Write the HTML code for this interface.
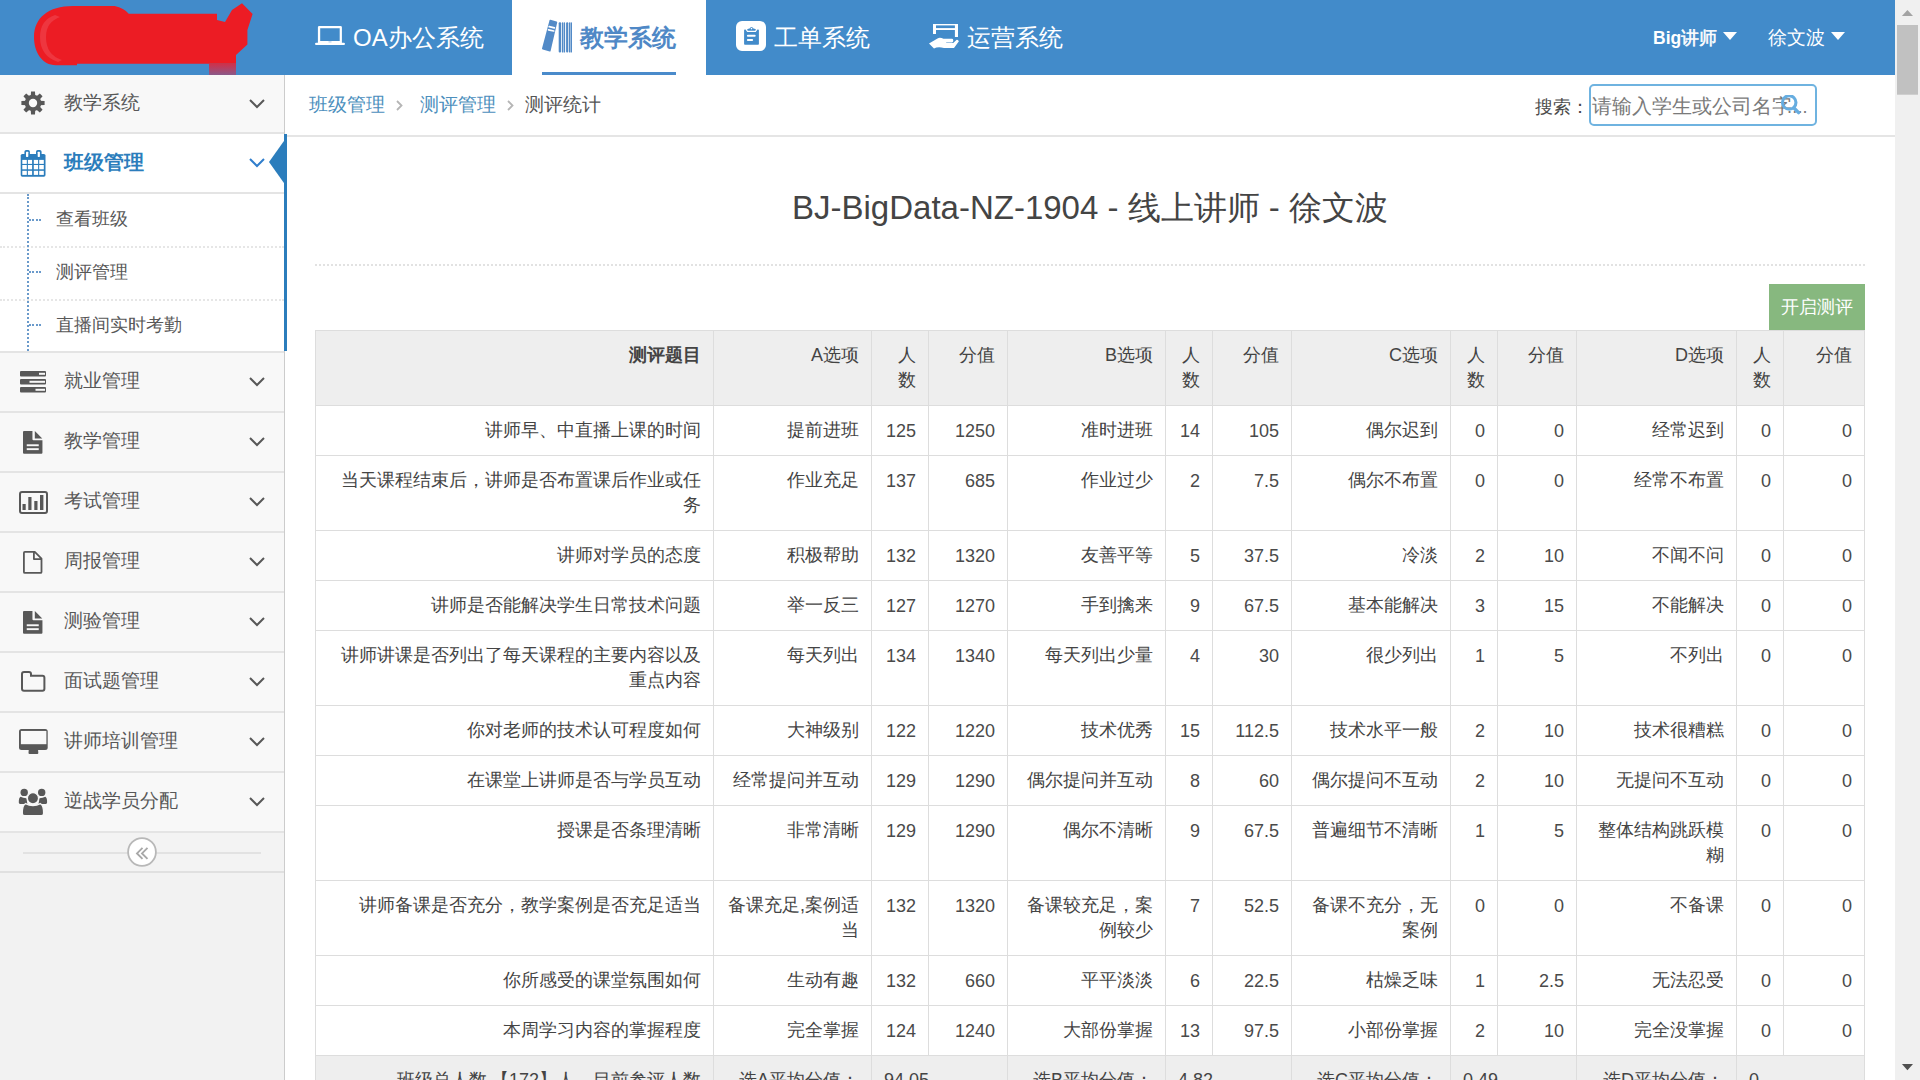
<!DOCTYPE html>
<html><head><meta charset="utf-8">
<style>
*{box-sizing:border-box}
html,body{margin:0;padding:0;width:1920px;height:1080px;overflow:hidden;background:#fff;font-family:"Liberation Sans",sans-serif;color:#393939}
.abs{position:absolute}
#hdr{position:absolute;left:0;top:0;width:1895px;height:75px;background:#428bca}
.tab{position:absolute;top:0;height:75px;color:#fff;font-size:24px;line-height:75px;white-space:nowrap}
.tab svg{position:absolute}
#side{position:absolute;z-index:5;left:0;top:75px;width:285px;height:1005px;background:#f2f2f2;border-right:1px solid #ccc}
.nav{position:absolute;left:0;width:284px;height:60px;background:#f8f8f8;border-bottom:2px solid #e4e4e4;font-size:19.5px;color:#585858}
.nav .t{position:absolute;left:64px;top:-1px;line-height:58px;font-size:19px}
.nav svg{position:absolute}
.chev{position:absolute;left:249px;width:16px;height:10px}
#crumb{position:absolute;left:285px;top:75px;width:1610px;height:62px;border-bottom:2px solid #e5e5e5;background:#fff;font-size:19px}
#scroll{position:absolute;left:1895px;top:0;width:25px;height:1080px;background:#f0f0f0}
table.d{position:absolute;left:315px;top:330px;width:1549px;border-collapse:collapse;table-layout:fixed;font-size:18px;color:#444}
table.d td,table.d th{border:1px solid #ddd;padding:12px 12px 12px 12px;line-height:25px;text-align:right;vertical-align:top;font-weight:normal}
table.d th{background:#eee;padding-top:12px}
table.d tr.f td{background:#eee}
.n{position:relative;top:1px;color:#4a4a4a}
</style></head><body>
<div id="hdr">
  <svg class="abs" style="left:0;top:0" width="260" height="75" viewBox="0 0 260 75"><path fill="#ec1c24" d="M73 6L114.6 6Q124 8 128.7 13.7L217 13.7L217 20L225 22L232 10L242 3.3L252.6 14L247.4 30L247.4 44.4L236 55L236 63.7L77 63.7L77 65.2L56 65.2C42 65.2 34 52 34 37C34 18 48 6 73 6Z"/><defs><linearGradient id="lg" x1="0" y1="0" x2="0" y2="1"><stop offset="0" stop-color="#d0304a"/><stop offset="1" stop-color="#8a5a8a"/></linearGradient></defs><path fill="url(#lg)" d="M209 63.7H236V75H209Z"/><path fill="#f0505a" opacity="0.5" d="M40 37Q40 20 55 15L60 17Q46 22 46 37Q46 55 62 60L58 62Q40 56 40 37Z"/></svg>
  <div class="tab" style="left:315px">
    <svg style="left:-5px;top:18px" width="40" height="35" viewBox="0 0 40 35"><path fill="#fff" fill-rule="evenodd" d="M9.3 7.9H30.5Q31.9 7.9 31.9 9.3V24.8H33.8Q35 24.8 35 26Q35 27.1 33.8 27.1H6.2Q5 27.1 5 26Q5 24.8 6.2 24.8H7.9V9.3Q7.9 7.9 9.3 7.9ZM10.2 10.2V23H29.7V10.2Z"/><rect x="18.5" y="23.4" width="3" height="1" fill="#a9c9e9"/></svg>
    <span style="position:absolute;left:38px;top:0">OA办公系统</span>
  </div>
  <div class="tab" style="left:512px;width:194px;background:#fff;color:#4f88c6;font-weight:bold">
    <svg style="left:24px;top:15px" width="44" height="43" viewBox="0 0 44 43"><path fill="#528ac7" d="M13.6 5.1Q13.9 4.6 14.5 4.8L20.6 6.6Q21.4 6.9 21.2 7.6L14.6 36Q14.4 36.6 13.7 36.5L6.7 34.5Q5.9 34.2 6 33.5Z"/><path stroke="#fff" stroke-width="1.7" stroke-linecap="round" d="M13.2 11.6L18.4 12.8M12.5 14.8L17.7 16"/><g fill="#528ac7"><rect x="22.7" y="7.2" width="2.4" height="30.4" rx="1"/><rect x="25.9" y="7.2" width="1.4" height="30.4" rx=".7"/><rect x="27.7" y="7.2" width="1.4" height="30.4" rx=".7"/><rect x="30.1" y="7.2" width="2.2" height="30.4" rx="1"/><rect x="33" y="7.2" width="1.3" height="30.4" rx=".6"/><rect x="34.6" y="7.2" width="1.4" height="30.4" rx=".7"/></g></svg>
    <span style="position:absolute;left:68px;top:0">教学系统</span>
    <div class="abs" style="left:30px;top:72px;width:134px;height:3px;background:#4a8bcb"></div>
  </div>
  <div class="tab" style="left:736px">
    <svg style="left:-6px;top:15px" width="45" height="43" viewBox="0 0 45 43"><rect x="6" y="6" width="30" height="30" rx="6" fill="#fff"/><path fill="#428bca" d="M14.1 15.2Q14.1 14.5 14.8 14.5H15.6L17.2 17H25.8L27.4 14.5H28.2Q28.9 14.5 28.9 15.2V28.9Q28.9 29.7 28.1 29.7H14.9Q14.1 29.7 14.1 28.9Z"/><path fill="#428bca" d="M17.1 14.3L20 13.3Q20.5 12 21.5 12Q22.5 12 23 13.3L25.9 14.3L25.3 15.8H17.7Z"/><circle cx="21.5" cy="13.6" r=".8" fill="#fff"/><rect x="16.9" y="19.7" width="8.8" height="2" rx="1" fill="#fff"/><rect x="16.9" y="24.1" width="6.2" height="2" rx="1" fill="#fff"/></svg>
    <span style="position:absolute;left:38px;top:0">工单系统</span>
  </div>
  <div class="tab" style="left:929px">
    <svg style="left:-7px;top:15px" width="45" height="43" viewBox="0 0 45 43"><g fill="#fff"><path d="M11 9H36V21.9H32.9V15.1H14V19.1H11Z"/><rect x="14" y="10.4" width="18.9" height="2.7" fill="#428bca"/><path d="M7 28.5L15.5 23.4Q18 22 21.5 23.8H30.2Q31.3 23.8 31.3 25.6Q31.3 27.4 30.2 27.4H24.2V27.9H31.2L34.4 24.9Q35.5 24.4 36.9 26.2L32 33H22Q16 31.4 12 33.5Z"/></g></svg>
    <span style="position:absolute;left:38px;top:0">运营系统</span>
  </div>
  <div class="tab" style="left:1653px;top:1px;font-size:17.5px;font-weight:bold">Big<span style="font-weight:normal;-webkit-text-stroke:0.5px #fff">讲师</span><svg style="left:70px;top:31px" width="14" height="8"><path d="M0 0 L14 0 L7 8 Z" fill="#fff"/></svg></div>
  <div class="tab" style="left:1768px;font-size:18.5px">徐文波<svg style="left:63px;top:32px" width="14" height="8"><path d="M0 0 L14 0 L7 8 Z" fill="#fff"/></svg></div>
</div>

<div id="side"><div class="nav" style="top:0;height:59px"><svg style="left:21.1px;top:16.3px" width="24" height="24" viewBox="0 0 24 24"><g fill="#585858"><path d="M18.00 9.65L23.60 10.05L23.60 13.95L18.00 14.35Z"/><path d="M17.90 14.58L21.58 18.82L18.82 21.58L14.58 17.90Z"/><path d="M14.35 18.00L13.95 23.60L10.05 23.60L9.65 18.00Z"/><path d="M9.42 17.90L5.18 21.58L2.42 18.82L6.10 14.58Z"/><path d="M6.00 14.35L0.40 13.95L0.40 10.05L6.00 9.65Z"/><path d="M6.10 9.42L2.42 5.18L5.18 2.42L9.42 6.10Z"/><path d="M9.65 6.00L10.05 0.40L13.95 0.40L14.35 6.00Z"/><path d="M14.58 6.10L18.82 2.42L21.58 5.18L17.90 9.42Z"/><circle cx="12" cy="12" r="8.3"/></g><circle cx="12" cy="12" r="4.2" fill="#f8f8f8"/></svg><div class="t">教学系统</div><svg class="chev" style="top:24px" width="16" height="10" viewBox="0 0 16 10"><path d="M1 1 L8 8 L15 1" fill="none" stroke="#585858" stroke-width="2"/></svg></div><div class="nav" style="top:59px;height:60px;background:#fff"><svg style="left:14px;top:9px" width="38" height="40" viewBox="0 0 38 40"><rect x="6.7" y="10.9" width="24.8" height="22.8" rx="1.6" fill="#2b7dbc"/><g fill="#2b7dbc"><rect x="10.4" y="6.9" width="5.5" height="7.5" rx="1.8"/><rect x="22" y="6.9" width="5.6" height="7.5" rx="1.8"/></g><g fill="#fff"><rect x="12" y="8.7" width="2.3" height="5.2" rx=".6"/><rect x="23.7" y="8.7" width="2.2" height="5.2" rx=".6"/><rect x="8.3" y="16.9" width="4.50" height="4.00"/><rect x="8.3" y="22" width="4.50" height="4.30"/><rect x="8.3" y="27.8" width="4.50" height="4.10"/><rect x="13.9" y="16.9" width="4.20" height="4.00"/><rect x="13.9" y="22" width="4.20" height="4.30"/><rect x="13.9" y="27.8" width="4.20" height="4.10"/><rect x="19.8" y="16.9" width="4.30" height="4.00"/><rect x="19.8" y="22" width="4.30" height="4.30"/><rect x="19.8" y="27.8" width="4.30" height="4.10"/><rect x="25.2" y="16.9" width="4.60" height="4.00"/><rect x="25.2" y="22" width="4.60" height="4.30"/><rect x="25.2" y="27.8" width="4.60" height="4.10"/></g></svg><div class="t" style="color:#2b7dbc;font-weight:bold;font-size:19.5px;top:-1.5px">班级管理</div><svg class="chev" style="top:24px" width="16" height="10" viewBox="0 0 16 10"><path d="M1 1 L8 8 L15 1" fill="none" stroke="#307ecc" stroke-width="2"/></svg></div><div class="abs" style="left:0;top:119px;width:284px;height:54px;background:#fff;font-size:18px;color:#585858;line-height:25px;border-bottom:2px dotted #e6e6e6"><span style="position:absolute;left:56px;top:13.25px">查看班级</span><div class="abs" style="left:29px;top:24.9px;width:12px;border-top:2px dotted #6a9acb"></div></div><div class="abs" style="left:0;top:173px;width:284px;height:53px;background:#fff;font-size:18px;color:#585858;line-height:25px;border-bottom:2px dotted #e6e6e6"><span style="position:absolute;left:56px;top:11.95px">测评管理</span><div class="abs" style="left:29px;top:23px;width:12px;border-top:2px dotted #6a9acb"></div></div><div class="abs" style="left:0;top:226px;width:284px;height:52px;background:#fff;font-size:18px;color:#585858;line-height:25px;border-bottom:2px solid #e4e4e4"><span style="position:absolute;left:56px;top:11.95px">直播间实时考勤</span><div class="abs" style="left:29px;top:23px;width:12px;border-top:2px dotted #6a9acb"></div></div><div class="abs" style="left:27px;top:119px;height:157px;border-left:2px dotted #6a9acb"></div><div class="abs" style="left:284px;top:59px;width:3px;height:217px;background:#2b7dbc"></div><svg class="abs" style="left:269px;top:65px;overflow:visible" width="16" height="44" viewBox="0 0 16 44"><path d="M16 -0.4 L0 22 L16 44.4 Z" fill="#2b7dbc"/></svg><div class="nav" style="top:278px;height:60px"><svg style="left:19px;top:18px" width="28" height="22" viewBox="0 0 28 22"><g fill="#585858"><rect x="1" y="0" width="26" height="5.5" rx="1"/><rect x="1" y="8" width="26" height="5.5" rx="1"/><rect x="1" y="16" width="26" height="5.5" rx="1"/></g><g fill="#f8f8f8"><rect x="20" y="1.8" width="6" height="2"/><rect x="10.5" y="9.8" width="15.5" height="2"/><rect x="16.5" y="17.8" width="9.5" height="2"/></g></svg><div class="t">就业管理</div><svg class="chev" style="top:24px" width="16" height="10" viewBox="0 0 16 10"><path d="M1 1 L8 8 L15 1" fill="none" stroke="#585858" stroke-width="2"/></svg></div><div class="nav" style="top:338px;height:60px"><svg style="left:23.26px;top:17.9px" width="20" height="23" viewBox="0 0 20 23"><path fill="#585858" d="M0 1Q0 0 1 0H9.44V8.2Q9.44 9.2 10.44 9.2H19.44V21.8Q19.44 22.8 18.44 22.8H1Q0 22.8 0 21.8Z"/><path fill="#585858" d="M11.84 0L19.24 7.4H11.84Z"/><rect x="3.74" y="13.3" width="12" height="1.9" fill="#f8f8f8"/><rect x="3.74" y="17.2" width="12" height="1.9" fill="#f8f8f8"/></svg><div class="t">教学管理</div><svg class="chev" style="top:24px" width="16" height="10" viewBox="0 0 16 10"><path d="M1 1 L8 8 L15 1" fill="none" stroke="#585858" stroke-width="2"/></svg></div><div class="nav" style="top:398px;height:60px"><svg style="left:19px;top:18px" width="29" height="23" viewBox="0 0 29 23"><rect x="1" y="1" width="27" height="21" rx="2" fill="none" stroke="#585858" stroke-width="2"/><g fill="#585858"><rect x="3.5" y="13" width="3.2" height="6"/><rect x="9.3" y="6" width="3.2" height="13"/><rect x="15.3" y="10" width="3.2" height="9"/><rect x="21" y="4" width="3.4" height="15"/></g></svg><div class="t">考试管理</div><svg class="chev" style="top:24px" width="16" height="10" viewBox="0 0 16 10"><path d="M1 1 L8 8 L15 1" fill="none" stroke="#585858" stroke-width="2"/></svg></div><div class="nav" style="top:458px;height:60px"><svg style="left:23.26px;top:17.9px" width="20" height="23" viewBox="0 0 20 23"><path fill="none" stroke="#585858" stroke-width="1.8" stroke-linejoin="round" d="M0.9 1.9Q0.9 0.9 1.9 0.9H11.8L18.5 7.6V20.9Q18.5 21.9 17.5 21.9H1.9Q0.9 21.9 0.9 20.9ZM10.9 0.9V8.1H18.5"/></svg><div class="t">周报管理</div><svg class="chev" style="top:24px" width="16" height="10" viewBox="0 0 16 10"><path d="M1 1 L8 8 L15 1" fill="none" stroke="#585858" stroke-width="2"/></svg></div><div class="nav" style="top:518px;height:60px"><svg style="left:23.26px;top:17.9px" width="20" height="23" viewBox="0 0 20 23"><path fill="#585858" d="M0 1Q0 0 1 0H9.44V8.2Q9.44 9.2 10.44 9.2H19.44V21.8Q19.44 22.8 18.44 22.8H1Q0 22.8 0 21.8Z"/><path fill="#585858" d="M11.84 0L19.24 7.4H11.84Z"/><rect x="3.74" y="13.3" width="12" height="1.9" fill="#f8f8f8"/><rect x="3.74" y="17.2" width="12" height="1.9" fill="#f8f8f8"/></svg><div class="t">测验管理</div><svg class="chev" style="top:24px" width="16" height="10" viewBox="0 0 16 10"><path d="M1 1 L8 8 L15 1" fill="none" stroke="#585858" stroke-width="2"/></svg></div><div class="nav" style="top:578px;height:60px"><svg style="left:20.85px;top:17.9px" width="25" height="21" viewBox="0 0 25 21"><path fill="none" stroke="#585858" stroke-width="2" d="M1 3Q1 1 3 1H8Q10 1 10 3V4.8H21.4Q23.4 4.8 23.4 6.8V17.7Q23.4 19.7 21.4 19.7H3Q1 19.7 1 17.7Z"/></svg><div class="t">面试题管理</div><svg class="chev" style="top:24px" width="16" height="10" viewBox="0 0 16 10"><path d="M1 1 L8 8 L15 1" fill="none" stroke="#585858" stroke-width="2"/></svg></div><div class="nav" style="top:638px;height:60px"><svg style="left:18.6px;top:15.8px" width="29" height="25" viewBox="0 0 29 25"><rect x="0" y="0" width="28.7" height="21.1" rx="2.5" fill="#585858"/><rect x="1.9" y="1.95" width="25.5" height="13.25" fill="#f8f8f8"/><path d="M9.8 20H19L19.3 24Q19.3 25 18.3 25H10.5Q9.5 25 9.5 24Z" fill="#585858"/></svg><div class="t">讲师培训管理</div><svg class="chev" style="top:24px" width="16" height="10" viewBox="0 0 16 10"><path d="M1 1 L8 8 L15 1" fill="none" stroke="#585858" stroke-width="2"/></svg></div><div class="nav" style="top:698px;height:60px"><svg style="left:14px;top:9px" width="38" height="36" viewBox="0 0 38 36"><g fill="#585858"><circle cx="10.2" cy="10.4" r="3.7"/><circle cx="27.7" cy="10.4" r="3.7"/><path d="M4.8 20.6Q4.7 15.5 6.6 14.8Q9 16.2 12.4 16.2L13.4 21.9H6.1Q4.8 21.9 4.8 20.6Z"/><path d="M33.1 20.6Q33.2 15.5 31.3 14.8Q28.9 16.2 25.5 16.2L24.5 21.9H31.8Q33.1 21.9 33.1 20.6Z"/><path stroke="#f8f8f8" stroke-width="1.3" d="M8.3 31.2Q8.3 23 11.6 21.6Q15 23.6 18.95 23.6Q22.9 23.6 26.3 21.6Q29.6 23 29.6 31.2Q29.6 33.7 27.1 33.7H10.8Q8.3 33.7 8.3 31.2Z"/><circle cx="18.95" cy="16.3" r="5.6" stroke="#f8f8f8" stroke-width="1.3"/></g></svg><div class="t">逆战学员分配</div><svg class="chev" style="top:24px" width="16" height="10" viewBox="0 0 16 10"><path d="M1 1 L8 8 L15 1" fill="none" stroke="#585858" stroke-width="2"/></svg></div><div class="abs" style="left:0;top:758px;width:284px;height:40px;background:#f3f3f3;border-bottom:2px solid #e0e0e0"><div class="abs" style="left:23px;top:18.8px;width:238px;border-top:2px solid #e2e2e2"></div><svg class="abs" style="left:126px;top:3px" width="32" height="32" viewBox="0 0 32 32"><circle cx="16" cy="16" r="13.9" fill="#fff" stroke="#b8b8b8" stroke-width="1.8"/><path d="M16.5 11.9L11 17.4L16.5 22.9M21.5 11.9L16 17.4L21.5 22.9" fill="none" stroke="#a8a8a8" stroke-width="1.9"/></svg></div></div>
<div id="crumb">
  <span class="abs" style="left:24px;top:17px;color:#4c8fbd">班级管理</span>
  <svg class="abs" style="left:111px;top:99px" width="8" height="12"></svg>
  <span class="abs" style="left:135px;top:17px;color:#4c8fbd">测评管理</span>
  <span class="abs" style="left:240px;top:17px;color:#555">测评统计</span>
  <svg class="abs" style="left:110px;top:23px" width="9" height="14" viewBox="0 0 9 14"><path d="M2 3 L6.5 7.5 L2 12" fill="none" stroke="#b5b5b5" stroke-width="1.8"/></svg>
  <svg class="abs" style="left:221px;top:23px" width="9" height="14" viewBox="0 0 9 14"><path d="M2 3 L6.5 7.5 L2 12" fill="none" stroke="#b5b5b5" stroke-width="1.8"/></svg>
  <span class="abs" style="left:1250px;top:20px;font-size:18px;color:#4a4a4a">搜索：</span>
  <div class="abs" style="left:1304px;top:9px;width:228px;height:42px;border:2px solid #6fb3e0;border-radius:5px;background:#fff">
    <span class="abs" style="left:1px;top:6px;font-size:20.3px;color:#7a7a7a;white-space:nowrap;letter-spacing:0">请输入学生或公司名字<span style="font-size:18px;position:relative;left:-5px;letter-spacing:0.2px">....</span></span>
    <svg class="abs" style="left:189px;top:9px;z-index:2" width="24" height="22" viewBox="0 0 24 22"><circle cx="9.2" cy="7.5" r="6.75" fill="none" stroke="#66ade0" stroke-width="3.1"/><path d="M14.2 13.2 L18.6 17.6" stroke="#66ade0" stroke-width="3.4" stroke-linecap="round"/></svg>
  </div>
</div>
<div class="abs" style="left:285px;top:137px;width:1610px;height:943px;background:#fff">
  <div class="abs" style="left:0;top:49px;width:1610px;text-align:center;font-size:33px;color:#444;font-family:'Liberation Sans',sans-serif">BJ-BigData-NZ-1904 - 线上讲师 - 徐文波</div>
  <div class="abs" style="left:30px;top:127px;width:1550px;border-top:2px dotted #e2e2e2"></div>
  <div class="abs" style="left:1484px;top:147px;width:96px;height:46px;background:#87b87f;color:#fff;font-size:18px;line-height:46px;text-align:center">开启测评</div>
</div>
<table class="d"><colgroup><col style="width:398px"><col style="width:158px"><col style="width:57px"><col style="width:79px"><col style="width:158px"><col style="width:47px"><col style="width:79px"><col style="width:159px"><col style="width:47px"><col style="width:79px"><col style="width:160px"><col style="width:47px"><col style="width:81px"></colgroup><tr><th style="font-weight:bold">测评题目</th><th>A选项</th><th>人数</th><th>分值</th><th>B选项</th><th>人数</th><th>分值</th><th>C选项</th><th>人数</th><th>分值</th><th>D选项</th><th>人数</th><th>分值</th></tr><tr><td>讲师早、中直播上课的时间</td><td>提前进班</td><td><span class="n">125</span></td><td><span class="n">1250</span></td><td>准时进班</td><td><span class="n">14</span></td><td><span class="n">105</span></td><td>偶尔迟到</td><td><span class="n">0</span></td><td><span class="n">0</span></td><td>经常迟到</td><td><span class="n">0</span></td><td><span class="n">0</span></td></tr><tr><td>当天课程结束后，讲师是否布置课后作业或任务</td><td>作业充足</td><td><span class="n">137</span></td><td><span class="n">685</span></td><td>作业过少</td><td><span class="n">2</span></td><td><span class="n">7.5</span></td><td>偶尔不布置</td><td><span class="n">0</span></td><td><span class="n">0</span></td><td>经常不布置</td><td><span class="n">0</span></td><td><span class="n">0</span></td></tr><tr><td>讲师对学员的态度</td><td>积极帮助</td><td><span class="n">132</span></td><td><span class="n">1320</span></td><td>友善平等</td><td><span class="n">5</span></td><td><span class="n">37.5</span></td><td>冷淡</td><td><span class="n">2</span></td><td><span class="n">10</span></td><td>不闻不问</td><td><span class="n">0</span></td><td><span class="n">0</span></td></tr><tr><td>讲师是否能解决学生日常技术问题</td><td>举一反三</td><td><span class="n">127</span></td><td><span class="n">1270</span></td><td>手到擒来</td><td><span class="n">9</span></td><td><span class="n">67.5</span></td><td>基本能解决</td><td><span class="n">3</span></td><td><span class="n">15</span></td><td>不能解决</td><td><span class="n">0</span></td><td><span class="n">0</span></td></tr><tr><td>讲师讲课是否列出了每天课程的主要内容以及重点内容</td><td>每天列出</td><td><span class="n">134</span></td><td><span class="n">1340</span></td><td>每天列出少量</td><td><span class="n">4</span></td><td><span class="n">30</span></td><td>很少列出</td><td><span class="n">1</span></td><td><span class="n">5</span></td><td>不列出</td><td><span class="n">0</span></td><td><span class="n">0</span></td></tr><tr><td>你对老师的技术认可程度如何</td><td>大神级别</td><td><span class="n">122</span></td><td><span class="n">1220</span></td><td>技术优秀</td><td><span class="n">15</span></td><td><span class="n">112.5</span></td><td>技术水平一般</td><td><span class="n">2</span></td><td><span class="n">10</span></td><td>技术很糟糕</td><td><span class="n">0</span></td><td><span class="n">0</span></td></tr><tr><td>在课堂上讲师是否与学员互动</td><td>经常提问并互动</td><td><span class="n">129</span></td><td><span class="n">1290</span></td><td>偶尔提问并互动</td><td><span class="n">8</span></td><td><span class="n">60</span></td><td>偶尔提问不互动</td><td><span class="n">2</span></td><td><span class="n">10</span></td><td>无提问不互动</td><td><span class="n">0</span></td><td><span class="n">0</span></td></tr><tr><td>授课是否条理清晰</td><td>非常清晰</td><td><span class="n">129</span></td><td><span class="n">1290</span></td><td>偶尔不清晰</td><td><span class="n">9</span></td><td><span class="n">67.5</span></td><td>普遍细节不清晰</td><td><span class="n">1</span></td><td><span class="n">5</span></td><td>整体结构跳跃模糊</td><td><span class="n">0</span></td><td><span class="n">0</span></td></tr><tr><td>讲师备课是否充分，教学案例是否充足适当</td><td>备课充足,案例适当</td><td><span class="n">132</span></td><td><span class="n">1320</span></td><td>备课较充足，案例较少</td><td><span class="n">7</span></td><td><span class="n">52.5</span></td><td>备课不充分，无案例</td><td><span class="n">0</span></td><td><span class="n">0</span></td><td>不备课</td><td><span class="n">0</span></td><td><span class="n">0</span></td></tr><tr><td>你所感受的课堂氛围如何</td><td>生动有趣</td><td><span class="n">132</span></td><td><span class="n">660</span></td><td>平平淡淡</td><td><span class="n">6</span></td><td><span class="n">22.5</span></td><td>枯燥乏味</td><td><span class="n">1</span></td><td><span class="n">2.5</span></td><td>无法忍受</td><td><span class="n">0</span></td><td><span class="n">0</span></td></tr><tr><td>本周学习内容的掌握程度</td><td>完全掌握</td><td><span class="n">124</span></td><td><span class="n">1240</span></td><td>大部份掌握</td><td><span class="n">13</span></td><td><span class="n">97.5</span></td><td>小部份掌握</td><td><span class="n">2</span></td><td><span class="n">10</span></td><td>完全没掌握</td><td><span class="n">0</span></td><td><span class="n">0</span></td></tr><tr class="f"><td>班级总人数<span style="margin-left:4px">【</span>172】人，目前参评人数<br>【172】人</td><td>选A平均分值：</td><td colspan="2" style="text-align:left">94.05</td><td>选B平均分值：</td><td colspan="2" style="text-align:left">4.82</td><td>选C平均分值：</td><td colspan="2" style="text-align:left">0.49</td><td>选D平均分值：</td><td colspan="2" style="text-align:left">0</td></tr></table>
<div id="scroll"><svg class="abs" style="left:0;top:0" width="25" height="1080" viewBox="0 0 25 1080"><path d="M6.9 16 L12.45 9.9 L18 16 Z" fill="#a3a3a3"/><rect x="2" y="25" width="21" height="69.7" fill="#c1c1c1"/><path d="M6.9 1064 L18 1064 L12.45 1070.2 Z" fill="#505050"/></svg></div>
</body></html>
